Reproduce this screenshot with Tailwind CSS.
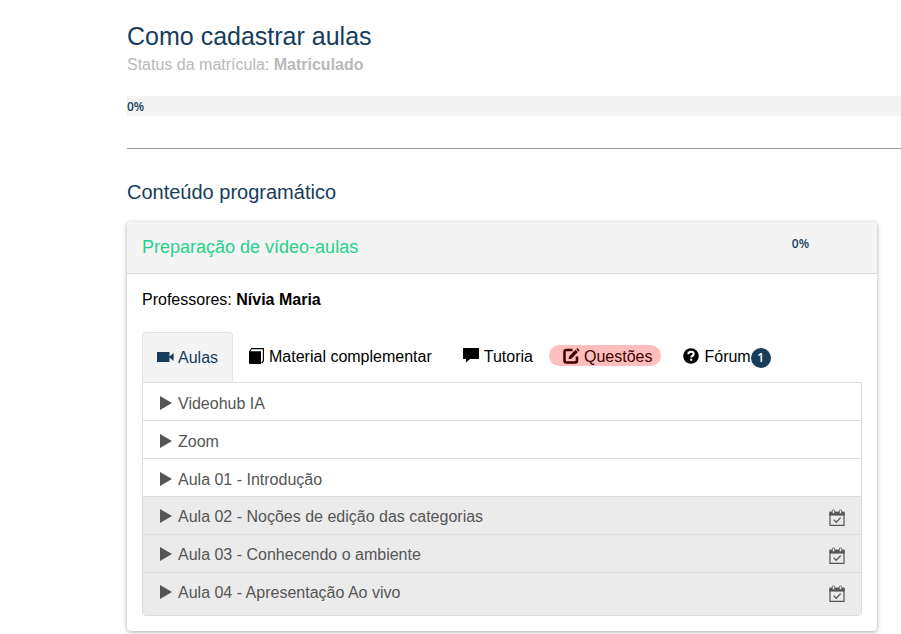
<!DOCTYPE html>
<html lang="pt-BR">
<head>
  <meta charset="UTF-8" />
  <meta name="viewport" content="width=device-width, initial-scale=1.0" />
  <title>Como cadastrar aulas</title>
  <script src="https://cdn.jsdelivr.net/npm/@tailwindcss/browser@4"></script>
</head>
<body class="bg-white text-black text-base font-['Liberation_Sans',Arial,sans-serif]">
  <svg class="hidden">
    <symbol id="play" viewBox="0 0 12 14">
      <path d="M0 0L12 7L0 14z" fill="currentColor"/>
    </symbol>
    <symbol id="calendar" viewBox="0 0 16 17">
      <path d="M1 4h14v12.300H1z" fill="none" stroke="currentColor" stroke-width="1.2"/>
      <path d="M.4 2.600h15.200v4H.4z" fill="currentColor"/>
      <path d="M3.300 4.800V2a1.200 1.200 0 0 1 2.400 0v2.800zM10.300 4.800V2a1.200 1.200 0 0 1 2.400 0v2.800z" fill="#ebebeb" stroke="currentColor" stroke-width=".8"/>
      <path d="M4.600 10.600l2.600 2.600 4.400-4.600" fill="none" stroke="currentColor" stroke-width="1.3"/>
    </symbol>
  </svg>

  <main class="pl-[127px] pt-[21px] pb-4">
    <!-- Course header -->
    <h1 class="text-[25px] leading-[30px] text-[#173c5c]">Como cadastrar aulas</h1>
    <p class="mt-[2px] leading-6 text-[#b9b9b9]">Status da matrícula: <strong>Matriculado</strong></p>
    <div class="mt-[19px] h-5 bg-[#f4f4f4] text-xs leading-[22px] font-semibold text-[#173c5c] font-['Open_Sans',sans-serif]">0%</div>
    <hr class="mt-8 border-[#999]" />

    <h2 class="mt-[31px] text-xl leading-6 text-[#173c5c]">Conteúdo programático</h2>

    <!-- Module card -->
    <section class="mt-[18px] mr-6 rounded-sm bg-white shadow-[0_1px_4px_rgba(0,0,0,0.35)]">
      <header class="flex justify-between rounded-t-sm border-b border-[#dadada] bg-[#f4f4f4] pt-3 pb-[13px] pl-[15px] pr-[68px]">
        <h3 class="text-lg leading-[26px] text-[#26d18e]">Preparação de vídeo-aulas</h3>
        <span class="text-xs leading-5 font-semibold text-[#173c5c] font-['Open_Sans',sans-serif]">0%</span>
      </header>

      <div class="px-[15px] pt-[14px] pb-[15px]">
        <p class="leading-6">Professores: <strong>Nívia Maria</strong></p>

        <!-- Tabs -->
        <div class="mt-5 flex items-center" role="tablist">
          <button type="button" role="tab" aria-selected="true" class="flex h-[50px] items-center gap-1 rounded-t border border-b-0 border-[#e3e3e3] bg-[#f4f4f4] px-[14px] text-[#173c5c]">
            <svg class="mb-[2px] h-4 w-[17px]" viewBox="0 0 17 16" fill="currentColor">
              <path d="M0 3h12.500v10H0zM12.500 7.500L16.600 4v8l-4.100-3.500z"/>
            </svg>
            Aulas
          </button>
          <button type="button" role="tab" class="flex h-[50px] items-center gap-[5px] px-4">
            <svg class="mb-[2px] h-4 w-[15px]" viewBox="0 0 15 16">
              <path d="M.5 4L2.500 .6H14.400V13L12.500 15" fill="none" stroke="currentColor" stroke-width="1.1"/>
              <path d="M0 3.200h12v12.800H1Q0 16 0 15z" fill="currentColor"/>
            </svg>
            Material complementar
          </button>
          <button type="button" role="tab" class="flex h-[50px] items-center gap-[5px] px-4 pl-[15px]">
            <svg class="mb-[2px] h-4 w-4" viewBox="0 0 16 16" fill="currentColor">
              <path d="M.6 0h14.800a.6 .6 0 0 1 .6 .6v9.800a.6 .6 0 0 1-.6 .6H7L3 14.500V11H.6a.6 .6 0 0 1-.6-.6V.6a.6 .6 0 0 1 .6-.6z"/>
            </svg>
            Tutoria
          </button>
          <button type="button" role="tab" class="mr-[6px] mb-[3px] flex h-[21px] items-center gap-1 rounded-full bg-[#ffbebe] pt-[3px] pr-[9px] pl-[14px] text-[#400000]">
            <svg class="mb-[3px] h-4 w-[17px]" viewBox="0 0 17 16">
              <path d="M9.500 2H3.500Q1.500 2 1.500 4v8.500Q1.500 14.500 3.500 14.500h8.500Q14 14.500 14 12.500V8.500" fill="none" stroke="currentColor" stroke-width="2.600"/>
              <path d="M5.500 11.300l.9-3.300L12.600 1.800l2.300 2.300L8.700 10.400zM13.300 1.100l1-1L16.600 2.400l-1 1z" fill="currentColor"/>
            </svg>
            Questões
          </button>
          <button type="button" role="tab" class="flex h-[50px] items-center gap-[5px] pl-4">
            <svg class="mb-[2px] h-4 w-4" viewBox="0 0 16 16">
              <circle cx="8" cy="8" r="7.800" fill="currentColor"/>
              <path d="M5.300 6.300Q5.300 3.700 8 3.700Q10.700 3.700 10.700 6Q10.700 7.300 9.200 8Q8.200 8.500 8.200 9.500M8.200 10.800v2" fill="none" stroke="#fff" stroke-width="2"/>
            </svg>
            <span class="flex items-center">Fórum
              <span class="mt-[2px] flex h-5 w-5 items-center justify-center rounded-full bg-[#173c5c] text-xs font-semibold text-white font-['Open_Sans',sans-serif]">1</span>
            </span>
          </button>
        </div>

        <!-- Lessons -->
        <ul class="rounded-b-sm border border-[#dcdcdc] text-[#555]">
          <li class="border-b border-[#dcdcdc]"><a href="#" class="flex h-[37px] items-center gap-[6px] px-4 pt-1"><svg class="mb-[2px] ml-[1px] h-[14px] w-3"><use href="#play"/></svg>Videohub IA</a></li>
          <li class="border-b border-[#dcdcdc]"><a href="#" class="flex h-[37px] items-center gap-[6px] px-4 pt-1"><svg class="mb-[2px] ml-[1px] h-[14px] w-3"><use href="#play"/></svg>Zoom</a></li>
          <li class="border-b border-[#dcdcdc]"><a href="#" class="flex h-[37px] items-center gap-[6px] px-4 pt-1"><svg class="mb-[2px] ml-[1px] h-[14px] w-3"><use href="#play"/></svg>Aula 01 - Introdução</a></li>
          <li class="border-b border-[#dcdcdc] bg-[#ebebeb]"><a href="#" class="flex h-[37px] items-center gap-[6px] px-4 pt-[3px]"><svg class="mb-[3px] ml-[1px] h-[14px] w-3"><use href="#play"/></svg>Aula 02 - Noções de edição das categorias<svg class="ml-auto h-[17px] w-4"><use href="#calendar"/></svg></a></li>
          <li class="border-b border-[#dcdcdc] bg-[#ebebeb]"><a href="#" class="flex h-[37px] items-center gap-[6px] px-4 pt-[3px]"><svg class="mb-[3px] ml-[1px] h-[14px] w-3"><use href="#play"/></svg>Aula 03 - Conhecendo o ambiente<svg class="ml-auto h-[17px] w-4"><use href="#calendar"/></svg></a></li>
          <li class="bg-[#ebebeb] pb-[5px]"><a href="#" class="flex h-[37px] items-center gap-[6px] px-4 pt-[3px]"><svg class="mb-[3px] ml-[1px] h-[14px] w-3"><use href="#play"/></svg>Aula 04 - Apresentação Ao vivo<svg class="ml-auto h-[17px] w-4"><use href="#calendar"/></svg></a></li>
        </ul>
      </div>
    </section>
  </main>
</body>
</html>
